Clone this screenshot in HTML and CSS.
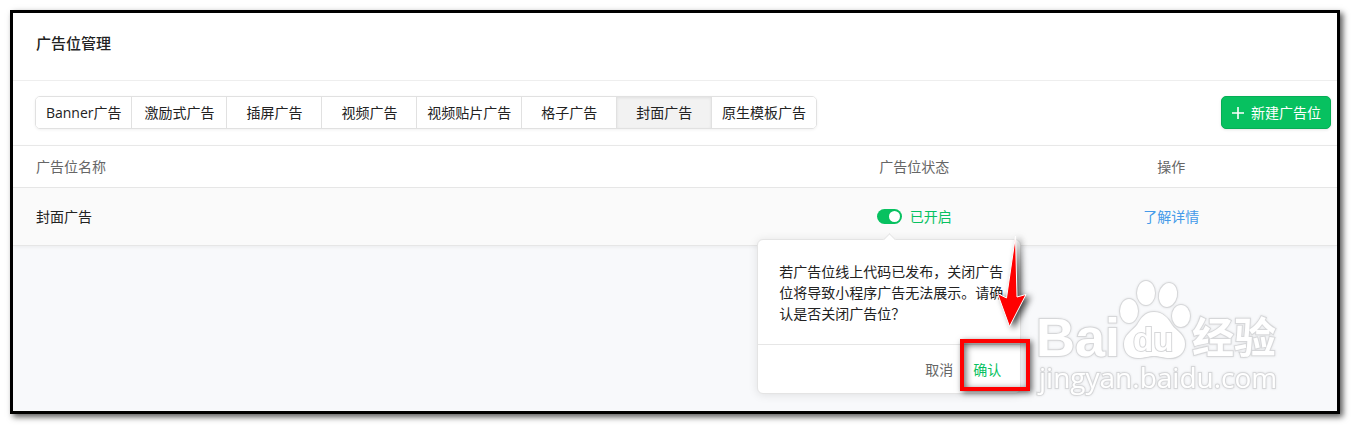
FILE: index.html
```html
<!DOCTYPE html>
<html lang="zh-CN">
<head>
    <meta charset="UTF-8">
    <meta name="viewport" content="width=device-width, initial-scale=1">
    <title>广告位管理</title>
    <link rel="stylesheet" href="styles.css">
</head>
<body>
<main class="frame">
    <header class="header">
        <h1 class="title">广告位管理</h1>
    </header>

    <div class="toolbar">
        <nav class="tabs">
            <button type="button" class="tab">Banner广告</button>
            <button type="button" class="tab">激励式广告</button>
            <button type="button" class="tab">插屏广告</button>
            <button type="button" class="tab">视频广告</button>
            <button type="button" class="tab">视频贴片广告</button>
            <button type="button" class="tab">格子广告</button>
            <button type="button" class="tab active">封面广告</button>
            <button type="button" class="tab">原生模板广告</button>
        </nav>
        <button type="button" class="btn-new">
            <svg width="14" height="14" viewBox="0 0 14 14" aria-hidden="true">
                <path d="M7 1v12M1 7h12" stroke="#fff" stroke-width="1.6" fill="none"/>
            </svg>
            新建广告位
        </button>
    </div>

    <table class="table">
        <thead>
        <tr>
            <th class="col-name">广告位名称</th>
            <th class="col-status">广告位状态</th>
            <th class="col-action">操作</th>
        </tr>
        </thead>
        <tbody>
        <tr>
            <td class="col-name">封面广告</td>
            <td class="col-status">
                <div class="status">
                    <div class="switch-wrap">
                        <input type="checkbox" class="switch" id="switch" checked>
                        <div class="popover">
                            <p class="popover-text">若广告位线上代码已发布，关闭广告位将导致小程序广告无法展示。请确认是否关闭广告位？</p>
                            <div class="popover-foot">
                                <button type="button" class="link-btn">取消</button>
                                <button type="button" class="link-btn primary">确认</button>
                            </div>
                            <div class="mark"></div>
                            <svg class="arrow" width="40" height="102" viewBox="0 0 40 102" aria-hidden="true">
                                <path d="M22.500 4L24 65L33 62.500L16.500 94.500L4.500 61.500L13.500 66Z"/>
                            </svg>
                        </div>
                    </div>
                    <label for="switch">已开启</label>
                </div>
            </td>
            <td class="col-action"><a href="#" class="link">了解详情</a></td>
        </tr>
        </tbody>
    </table>

    <!-- 右下角水印 -->
    <svg class="watermark" width="250" height="122" viewBox="0 0 250 122">
        <text class="wm-bai" x="2" y="78">Bai</text>
        <ellipse cx="95" cy="33" rx="9" ry="12"/>
        <ellipse cx="112" cy="15" rx="9" ry="12"/>
        <ellipse cx="134" cy="17" rx="9" ry="12" transform="rotate(12 134 17)"/>
        <ellipse cx="147" cy="38" rx="9" ry="11"/>
        <path d="M120 34C129 34 134 40 138 47C142 53 151 56 151 66C151 75 144 80 136 80C129 80 126 78 120 78C114 78 111 80 104 80C96 80 90 75 90 66C90 57 98 53 103 47C107 40 111 34 120 34Z"/>
        <text class="wm-du" x="99" y="73">du</text>
        <text class="wm-exp" x="158" y="75">经验</text>
        <text class="wm-url" x="5" y="110">jingyan.baidu.com</text>
    </svg>
</main>
</body>
</html>
```
FILE: styles.css
```css
* {
    box-sizing: border-box;
}

body {
    margin: 0;
    padding: 10px 11px 11px 10px;
    background: #fff;
    color: #222;
    font: 14px/21px "Open Sans", "Noto Sans CJK SC", sans-serif;
}

button {
    font: inherit;
    color: inherit;
    cursor: pointer;
}

.frame {
    position: relative;
    min-height: calc(100vh - 21px);
    border: 3px solid #000;
    background: #f8f9fb;
    box-shadow: 3px 3px 6px rgba(0, 0, 0, .65);
}

.header {
    padding: 20px 23px 26px;
    background: #fff;
    border-bottom: 1px solid #eee;
}

.title {
    margin: 0;
    font-size: 15px;
    line-height: 21px;
    font-weight: 500;
}

/* 广告类型切换 */
.toolbar {
    display: flex;
    justify-content: space-between;
    align-items: center;
    padding: 15px 6px 16px 22px;
    background: #fff;
    border-bottom: 1px solid #ebebeb;
}

.tabs {
    display: flex;
    width: 782px;
    height: 33px;
    border: 1px solid #e1e1e1;
    border-radius: 5px;
    box-shadow: 0 1px 3px rgba(0, 0, 0, .06);
    overflow: hidden;
}

.tab {
    flex: 1 1 auto;
    min-width: 95px;
    padding: 0 9px;
    border: 0;
    border-left: 1px solid #e1e1e1;
    background: #fff;
    white-space: nowrap;
}

.tab:first-child {
    border-left: 0;
}

.tab.active {
    background: #f2f2f2;
    box-shadow: inset 0 1px 3px rgba(0, 0, 0, .08);
}

.btn-new {
    display: flex;
    align-items: center;
    gap: 6px;
    height: 33px;
    padding: 0 9px;
    border: 1px solid #06ad56;
    border-radius: 5px;
    background: #07c160;
    color: #fff;
    box-shadow: 0 1px 3px rgba(0, 0, 0, .1);
}

.table {
    width: 100%;
    table-layout: fixed;
    border-collapse: separate;
    border-spacing: 0;
    box-shadow: 0 1px 4px rgba(0, 0, 0, .06);
}

.table th {
    height: 42px;
    padding: 0;
    background: #fff;
    border-bottom: 1px solid #e6e6e6;
    color: #666;
    font-weight: 400;
}

.table td {
    height: 58px;
    padding: 0;
    background: #fafafa;
    border-bottom: 1px solid #e6e6e6;
}

.table .col-name {
    width: 58%;
    padding-left: 23px;
    text-align: left;
}

.table .col-status {
    width: 20%;
    padding-left: 2px;
    text-align: center;
}

.table .col-action {
    padding-right: 40px;
    text-align: center;
}

.link {
    color: #459ae9;
    text-decoration: none;
}

.status {
    display: flex;
    justify-content: center;
    align-items: center;
    gap: 8px;
    color: #07c160;
}

.switch-wrap {
    position: relative;
    display: flex;
}

.switch {
    display: flex;
    align-items: center;
    justify-content: flex-end;
    width: 25px;
    height: 15px;
    margin: 0;
    padding: 2px;
    border-radius: 8px;
    background: #07c160;
    appearance: none;
}

.switch::before {
    content: "";
    width: 11px;
    height: 11px;
    border-radius: 50%;
    background: #fff;
}

/* 关闭确认气泡 */
.popover {
    position: absolute;
    top: 30px;
    left: 50%;
    width: 264px;
    margin-left: -132px;
    border: 1px solid #e4e4e4;
    border-radius: 6px;
    background: #fff;
    color: #222;
    text-align: left;
    box-shadow: 0 1px 10px rgba(0, 0, 0, .1);
    z-index: 2;
}

.popover::before {
    content: "";
    position: absolute;
    top: -5px;
    left: 50%;
    width: 8px;
    height: 8px;
    margin-left: -4px;
    border: 1px solid #e4e4e4;
    border-width: 1px 0 0 1px;
    background: #fff;
    transform: rotate(45deg);
}

.popover-text {
    margin: 0;
    padding: 21px 16px 20px 21px;
    border-bottom: 1px solid #e6e6e6;
}

.popover-foot {
    display: flex;
    justify-content: flex-end;
    gap: 20px;
    padding: 14px 19px 13px;
}

.link-btn {
    padding: 0;
    border: 0;
    background: none;
    color: #666;
}

.link-btn.primary {
    color: #07c160;
}

/* 红框和箭头标注 */
.mark {
    position: absolute;
    top: 99px;
    left: 202px;
    width: 70px;
    height: 52px;
    border: 4px solid #f00;
    box-shadow: 2px 2px 6px rgba(0, 0, 0, .6), inset 2px 2px 7px rgba(0, 0, 0, .6);
    pointer-events: none;
}

.arrow {
    position: absolute;
    top: -8px;
    left: 235px;
    overflow: visible;
    fill: #f00;
    stroke: #fff;
    stroke-width: 1;
    filter: drop-shadow(4px 2px 3px rgba(0, 0, 0, .7));
    pointer-events: none;
}

.watermark {
    position: absolute;
    right: 53px;
    bottom: 11px;
    overflow: visible;
    fill: #fff;
    stroke: #d6d7d9;
    stroke-width: 2;
    paint-order: stroke;
    filter: drop-shadow(0 0 1px rgba(0, 0, 0, .1));
}

.wm-bai {
    font: bold 54px "Liberation Sans", sans-serif;
}

.wm-du {
    font: bold 33px "Liberation Sans", sans-serif;
}

.wm-exp {
    font: bold 42px "Noto Sans CJK SC", sans-serif;
}

.wm-url {
    font: 28px "Open Sans", sans-serif;
}
```
